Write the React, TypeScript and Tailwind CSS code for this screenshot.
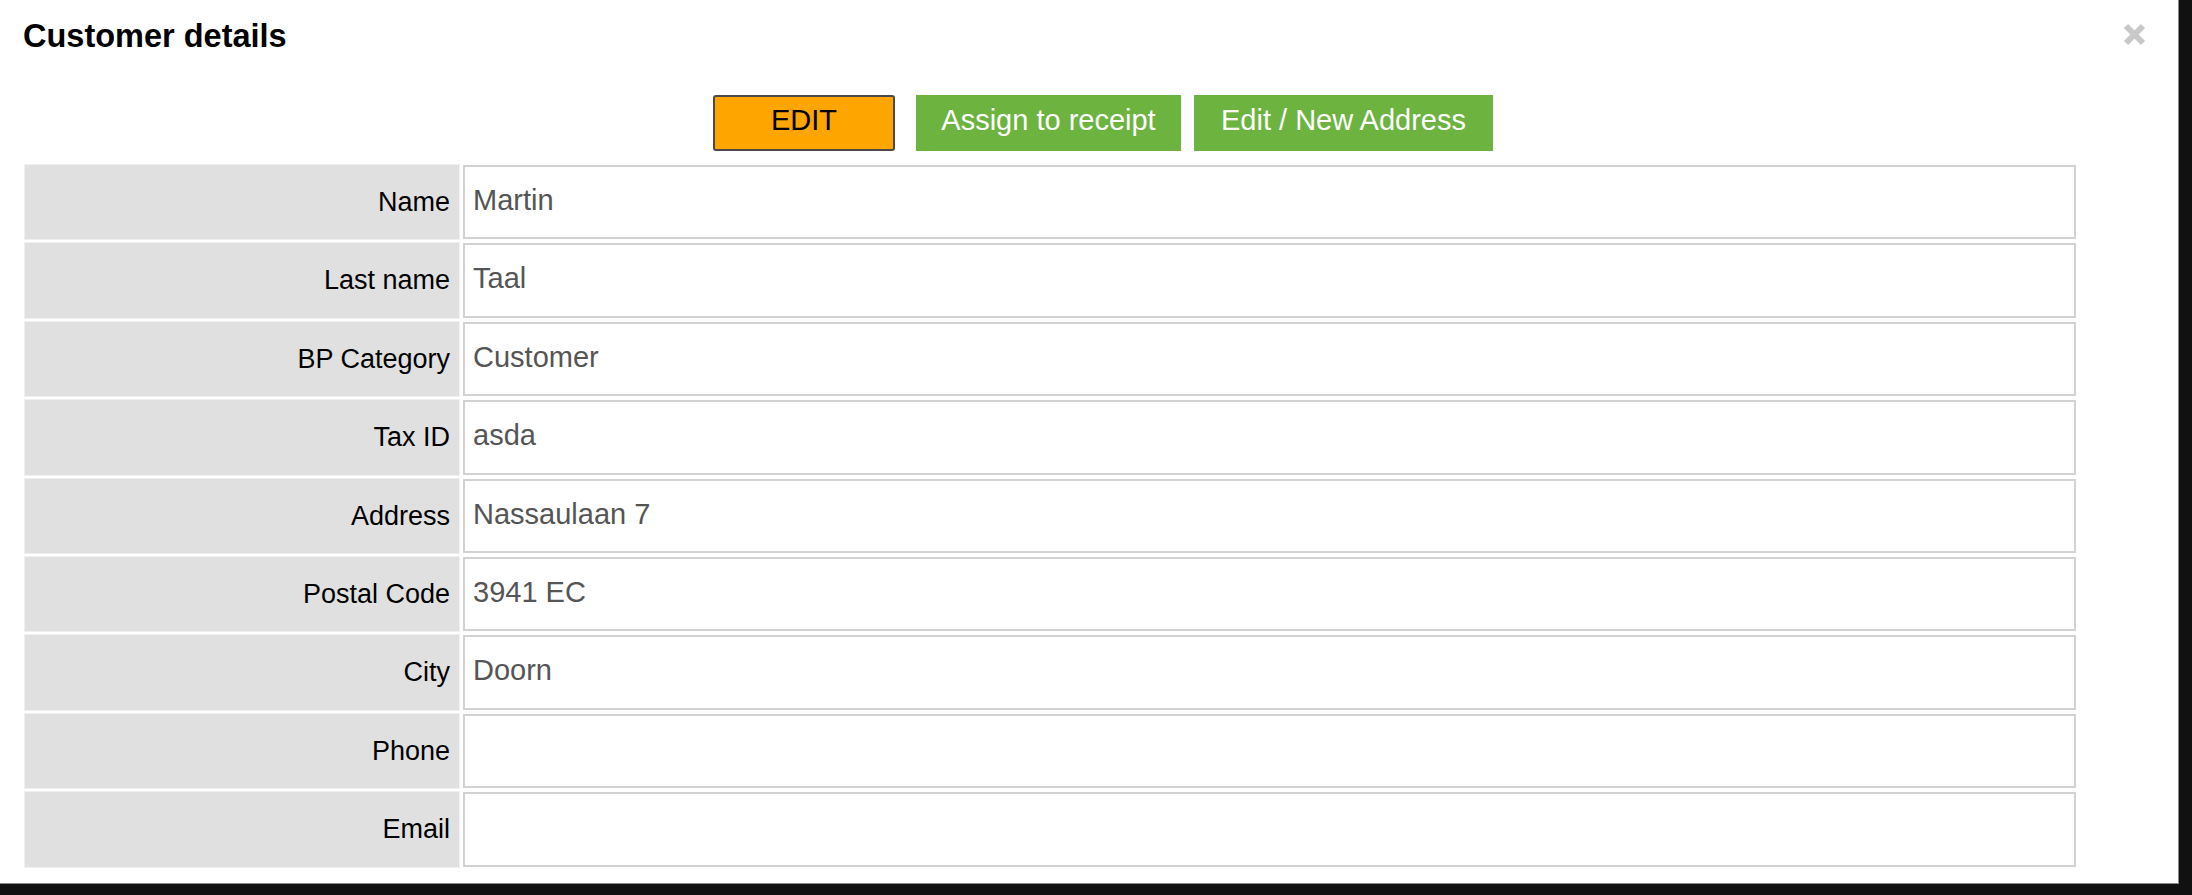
import React from "react";

const rows: { label: string; value: string }[] = [
  { label: "Name", value: "Martin" },
  { label: "Last name", value: "Taal" },
  { label: "BP Category", value: "Customer" },
  { label: "Tax ID", value: "asda" },
  { label: "Address", value: "Nassaulaan 7" },
  { label: "Postal Code", value: "3941 EC" },
  { label: "City", value: "Doorn" },
  { label: "Phone", value: "" },
  { label: "Email", value: "" },
];

const CloseIcon = () => (
  <svg width="23" height="23" viewBox="0 0 23 23">
    <path d="M3 3 L20 20 M20 3 L3 20" stroke="#c8c8c8" strokeWidth="6" strokeLinecap="butt" />
  </svg>
);

export default function App() {
  return (
    <div className="w-[2192px] h-[895px] bg-[#111111] overflow-hidden font-['Liberation_Sans',Arial,sans-serif]">
      <div className="relative w-[2179px] h-[884px] bg-white border-r border-b border-[#8a8a8a]">
        {/* Header */}
        <h2 className="pt-[17px] pl-[23px] text-[32.5px] leading-[38px] font-bold text-black">
          Customer details
        </h2>
        <button className="absolute top-[23px] right-[32px] w-[23px] h-[23px]">
          <CloseIcon />
        </button>

        {/* Actions */}
        <div className="mt-[40px] pl-[713px] flex">
          <button className="w-[182px] h-[56px] flex items-center justify-center pb-[5px] bg-[#ffa500] border-2 border-[#4a4a4a] rounded-[3px] text-black text-[29px]">
            EDIT
          </button>
          <button className="ml-[21px] w-[265px] h-[56px] flex items-center justify-center pb-[5px] bg-[#6cb33f] text-white text-[29px]">
            Assign to receipt
          </button>
          <button className="ml-[13px] w-[299px] h-[56px] flex items-center justify-center pb-[5px] bg-[#6cb33f] text-white text-[29px]">
            Edit / New Address
          </button>
        </div>

        {/* Details */}
        <table className="mt-[10px] ml-[21px] w-[2059px] border-separate border-spacing-[4px]">
          <tbody>
            {rows.map((row) => (
              <tr key={row.label}>
                <td className="w-[434px] h-[74.4px] p-0 pr-[9px] bg-[#e0e0e0] outline outline-1 outline-[#f0f0f0] text-right align-middle text-[27px] text-black">
                  {row.label}
                </td>
                <td className="p-0 align-middle">
                  <div className="h-[74.4px] flex items-center pl-[8px] pb-[3px] border-2 border-[#d2d2d2] text-[29px] text-[#555555]">
                    {row.value}
                  </div>
                </td>
              </tr>
            ))}
          </tbody>
        </table>
      </div>
    </div>
  );
}
